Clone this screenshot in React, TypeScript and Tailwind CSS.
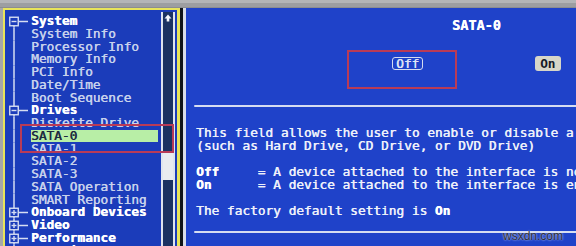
import React from "react";

const mono = "font-['DejaVu_Sans_Mono','Liberation_Mono',monospace]";

type Row = { label: string; kind: "open" | "closed" | "item"; active?: boolean };

const tree: Row[] = [
  { label: "System", kind: "open" },
  { label: "System Info", kind: "item" },
  { label: "Processor Info", kind: "item" },
  { label: "Memory Info", kind: "item" },
  { label: "PCI Info", kind: "item" },
  { label: "Date/Time", kind: "item" },
  { label: "Boot Sequence", kind: "item" },
  { label: "Drives", kind: "open" },
  { label: "Diskette Drive", kind: "item" },
  { label: "SATA-0", kind: "item", active: true },
  { label: "SATA-1", kind: "item" },
  { label: "SATA-2", kind: "item" },
  { label: "SATA-3", kind: "item" },
  { label: "SATA Operation", kind: "item" },
  { label: "SMART Reporting", kind: "item" },
  { label: "Onboard Devices", kind: "closed" },
  { label: "Video", kind: "closed" },
  { label: "Performance", kind: "closed" },
  { label: "Security", kind: "closed" },
];

function Branch({ kind, first }: { kind: Row["kind"]; first: boolean }) {
  const c = "#d6ddf2";
  return (
    <svg width="25" height="12.75" viewBox="0 0 25 12.75" className="shrink-0">
      {kind === "item" ? (
        <line x1="8" y1="0" x2="8" y2="12.75" stroke={c} strokeWidth="1.5" />
      ) : (
        <>
          {!first && <line x1="8" y1="0" x2="8" y2="2.5" stroke={c} strokeWidth="1.5" />}
          <line x1="8" y1="10.5" x2="8" y2="12.75" stroke={c} strokeWidth="1.5" />
          <rect x="3.75" y="2.25" width="8.5" height="8.5" fill="none" stroke={c} strokeWidth="1.4" />
          <line x1="5.5" y1="6.5" x2="10.5" y2="6.5" stroke={c} strokeWidth="1.4" />
          {kind === "closed" && <line x1="8" y1="4" x2="8" y2="9" stroke={c} strokeWidth="1.4" />}
          <line x1="12.5" y1="6.5" x2="22" y2="6.5" stroke={c} strokeWidth="1.5" />
        </>
      )}
    </svg>
  );
}

function TreeRow({ row, first }: { row: Row; first: boolean }) {
  const header = row.kind !== "item";
  return (
    <div className="flex h-[12.75px] items-center">
      <Branch kind={row.kind} first={first} />
      <span
        className={
          row.active
            ? "flex h-[12px] w-[127px] items-center bg-[#b8eea6] text-[#1c2a40]"
            : header
            ? "font-bold text-white"
            : "text-[#c8d2ec]"
        }
      >
        {row.label}
      </span>
    </div>
  );
}

function Scrollbar() {
  return (
    <div className="mt-[2px] flex w-[14px] shrink-0 flex-col border-x-2 border-[#dfe4ee] bg-[#1b3262]">
      <div className="flex h-[11px] items-center justify-center">
        <svg width="8" height="8" viewBox="0 0 8 8">
          <path d="M4 0.5 L7.5 4.5 H5.3 V7.5 H2.7 V4.5 H0.5 Z" fill="#f4f6fb" />
        </svg>
      </div>
      <div className="h-[130px]" />
      <div className="h-[27px] bg-[#e9ebef]" />
      <div className="flex-1" />
    </div>
  );
}

const helpLines: React.ReactNode[] = [
  "This field allows the user to enable or disable a SATA device",
  "(such as Hard Drive, CD Drive, or DVD Drive)",
  "",
  <>
    <b className="font-bold text-white">Off</b>     = A device attached to the interface is not visible
  </>,
  <>
    <b className="font-bold text-white">On</b>      = A device attached to the interface is enabled
  </>,
  "",
  <>
    The factory default setting is <b className="font-bold text-white">On</b>
  </>,
];

export default function App() {
  return (
    <div className={`relative flex h-[246px] w-[576px] flex-col overflow-hidden bg-[#a6a7a9] ${mono} text-[12.8px] leading-[12.75px]`}>
      {/* bezel strip along the top */}
      <div className="h-[8px] shrink-0 border-t-[3px] border-b border-t-[#b4b5b7] border-b-[#8c8d90] bg-[#9d9ea1]" />

      <div className="flex min-h-0 flex-1 pl-[3px] [text-shadow:0.45px_0_0_currentColor]">
        {/* Left menu tree */}
        <div className="flex w-[177px] shrink-0 border-t-2 border-l-2 border-r-[3px] border-[#e8e45a] bg-[#1b3cba] pr-[2px]">
          <div className="flex min-w-0 flex-1 flex-col pt-[5px] pl-px whitespace-pre">
            {tree.map((r, i) => (
              <TreeRow key={r.label} row={r} first={i === 0} />
            ))}
          </div>
          <Scrollbar />
        </div>
        <div className="w-[3px] shrink-0 bg-[#101418]" />
        <div className="w-[3px] shrink-0 bg-[#d9dde6]" />

        {/* Right detail pane */}
        <div className="flex min-w-0 flex-1 flex-col bg-[#1f42c9] text-[#eef1fa]">
          <div className="pt-[10.5px] pl-[266px] text-[13.5px] font-bold text-white">SATA-0</div>

          <div className="mt-[25px] flex items-center">
            <span className="ml-[206px] rounded-[3px] border-[1.5px] border-[#d4dbef] px-[3px] leading-[11px] text-[#dfe5f5]">
              Off
            </span>
            <span className="ml-[112px] rounded-[3px] bg-[#d7d6c8] px-[5px] py-px font-bold leading-[13px] text-[#161a26] [text-shadow:none]">
              On
            </span>
          </div>

          <div className="mt-[34px] ml-[8px] h-[2px] shrink-0 rounded-l-full bg-[#d6ddf1]" />

          <div className="mt-[20px] pl-[10px] whitespace-pre">
            {helpLines.map((l, i) => (
              <div key={i} className="h-[12.9px]">
                {l}
              </div>
            ))}
          </div>

          <div className="mt-[14px] ml-[8px] h-[2px] shrink-0 rounded-l-full bg-[#d6ddf1]" />
        </div>
      </div>

      {/* annotation boxes */}
      <div className="absolute top-[124px] left-[20px] h-[29px] w-[154px] border-2 border-[#b93b57]" />
      <div className="absolute top-[50px] left-[347px] h-[39px] w-[110px] border-2 border-[#b93b57]" />

      {/* watermark */}
      <div className="absolute top-[229px] left-[503px] font-['Liberation_Sans',Arial,sans-serif] text-[12px] leading-[14px] text-[#2a2d36] [text-shadow:0_0_2px_#ffffff]">
        wsxdn.com
      </div>
    </div>
  );
}
